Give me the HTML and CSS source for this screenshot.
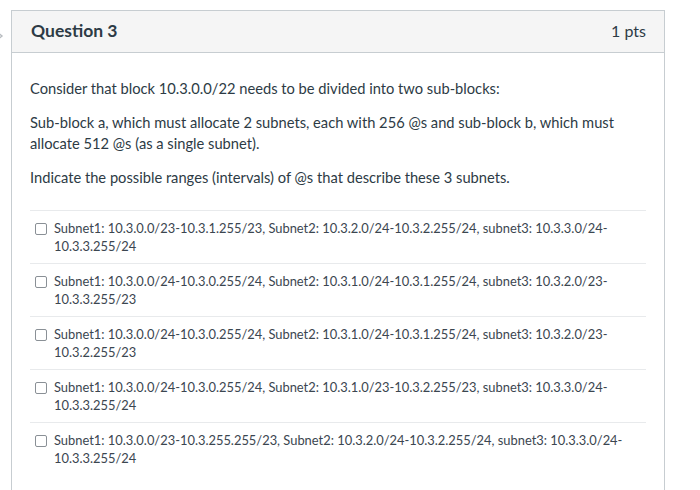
FILE: index.html
```html
<!DOCTYPE html>
<html lang="en">
<head>
<meta charset="utf-8">
<title>Question 3</title>
<link rel="stylesheet" href="styles.css">
</head>
<body>
<div class="page">
  <div class="marker">
    <svg width="8" height="10" viewBox="0 0 8 10"><path d="M0 1 L5 5 L0 9" fill="none" stroke="#b8bcc0" stroke-width="1.4"/></svg>
  </div>
  <div class="card">
    <div class="header">
      <span class="title">Question 3</span>
      <span class="pts">1 pts</span>
    </div>
    <div class="content">
      <p>Consider that block 10.3.0.0/22 needs to be divided into two sub-blocks:</p>
      <p>Sub-block a, which must allocate 2 subnets, each with 256 @s and sub-block b, which must allocate 512 @s (as a single subnet).</p>
      <p>Indicate the possible ranges (intervals) of @s that describe these 3 subnets.</p>
      <div class="answers">
        <label class="answer"><span class="box"></span><span class="text">Subnet1: 10.3.0.0/23-10.3.1.255/23, Subnet2: 10.3.2.0/24-10.3.2.255/24, subnet3: 10.3.3.0/24-<br>10.3.3.255/24</span></label>
        <label class="answer"><span class="box"></span><span class="text">Subnet1: 10.3.0.0/24-10.3.0.255/24, Subnet2: 10.3.1.0/24-10.3.1.255/24, subnet3: 10.3.2.0/23-<br>10.3.3.255/23</span></label>
        <label class="answer"><span class="box"></span><span class="text">Subnet1: 10.3.0.0/24-10.3.0.255/24, Subnet2: 10.3.1.0/24-10.3.1.255/24, subnet3: 10.3.2.0/23-<br>10.3.2.255/23</span></label>
        <label class="answer"><span class="box"></span><span class="text">Subnet1: 10.3.0.0/24-10.3.0.255/24, Subnet2: 10.3.1.0/23-10.3.2.255/23, subnet3: 10.3.3.0/24-<br>10.3.3.255/24</span></label>
        <label class="answer"><span class="box"></span><span class="text">Subnet1: 10.3.0.0/23-10.3.255.255/23, Subnet2: 10.3.2.0/24-10.3.2.255/24, subnet3: 10.3.3.0/24-<br>10.3.3.255/24</span></label>
      </div>
    </div>
  </div>
</div>
</body>
</html>
```

FILE: styles.css
```css
html, body {
  margin: 0;
  padding: 0;
  background: #ffffff;
}
body {
  font-family: Lato, "Open Sans", sans-serif;
  color: #2d3b45;
  width: 700px;
  height: 490px;
  overflow: hidden;
}
.page {
  display: flex;
  align-items: flex-start;
  padding-top: 10px;
}
.marker {
  width: 11px;
  margin-left: -3px;
  padding-top: 21px;
  flex: none;
}
.marker svg {
  display: block;
}
.card {
  width: 652px;
  height: 490px;
  border: 1px solid #c7cdd1;
  border-bottom: none;
  margin-left: 3px;
}
.header {
  height: 41px;
  background: #f5f5f5;
  border-bottom: 1px solid #c7cdd1;
  display: flex;
  align-items: center;
  justify-content: space-between;
  padding: 0 18px 2px 19px;
  box-sizing: border-box;
  height: 42px;
}
.title {
  font-size: 17.5px;
  font-weight: 700;
  color: #2d3b45;
}
.pts {
  font-size: 16px;
  font-weight: 400;
  color: #2d3b45;
}
.content {
  padding: 25px 18px 0 18px;
}
.content p {
  margin: 0 0 12px 0;
  font-size: 14.7px;
  line-height: 21.5px;
  color: #2d3b45;
}
.answers {
  margin-top: 22px;
}
.answer {
  display: flex;
  align-items: flex-start;
  border-top: 1px solid #e8eaec;
  padding: 9px 0 8px 5px;
  font-size: 12.9px;
  line-height: 17.5px;
  color: #3b4650;
}
.box {
  flex: none;
  width: 10px;
  height: 10px;
  border: 1px solid #8a9096;
  border-radius: 2px;
  background: #fff;
  margin-top: 3px;
  margin-right: 7px;
}
.text {
  display: block;
}
```
